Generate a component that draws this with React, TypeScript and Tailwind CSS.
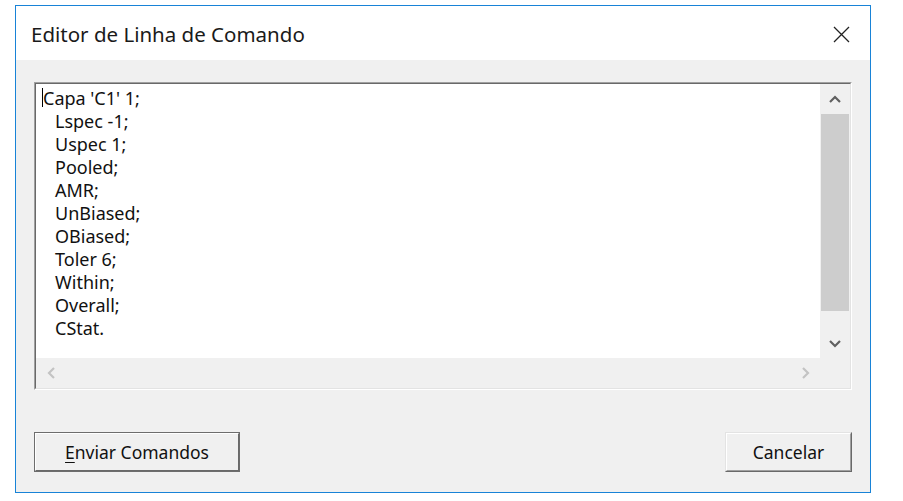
import React from "react";

const lines: [string, boolean][] = [
  ["Capa 'C1' 1;", false],
  ["Lspec -1;", true],
  ["Uspec 1;", true],
  ["Pooled;", true],
  ["AMR;", true],
  ["UnBiased;", true],
  ["OBiased;", true],
  ["Toler 6;", true],
  ["Within;", true],
  ["Overall;", true],
  ["CStat.", true],
];

function Chevron({ dir, color }: { dir: "up" | "down" | "left" | "right"; color: string }) {
  const d =
    dir === "up"
      ? "M1 7 L6 2 L11 7"
      : dir === "down"
      ? "M1 2 L6 7 L11 2"
      : dir === "left"
      ? "M7 1 L2 6 L7 11"
      : "M2 1 L7 6 L2 11";
  const w = dir === "up" || dir === "down" ? 12 : 9;
  const h = dir === "up" || dir === "down" ? 9 : 12;
  return (
    <svg width={w} height={h} viewBox={`0 0 ${w} ${h}`}>
      <path d={d} fill="none" stroke={color} strokeWidth="2.2" />
    </svg>
  );
}

export default function App() {
  return (
    <div
      className="w-[903px] h-[501px] bg-white pt-[5px] pl-[15px]"
      style={{ fontFamily: '"Noto Sans", "Open Sans", sans-serif' }}
    >
      <div className="w-[856px] h-[488px] border border-[#1883d7] flex flex-col">
        {/* Title bar */}
        <div className="h-[54px] bg-white flex items-center justify-between pl-[15px] pr-[20px] pt-[2px] shrink-0">
          <span className="text-[20.5px] text-[#1a1a1a] leading-none">Editor de Linha de Comando</span>
          <svg width="17" height="17" viewBox="0 0 17 17">
            <path d="M1 1 L16 16 M16 1 L1 16" stroke="#222" strokeWidth="1.3" fill="none" />
          </svg>
        </div>
        {/* Body */}
        <div className="flex-1 bg-[#f0f0f0] px-[18px] pt-[22px] pb-[20px] flex flex-col">
          {/* Text area */}
          <div className="h-[308px] border border-t-[#a0a0a0] border-l-[#a0a0a0] border-r-[#ffffff] border-b-[#ffffff]">
            <div className="h-full border border-t-[#696969] border-l-[#696969] border-r-[#e3e3e3] border-b-[#e3e3e3] flex flex-col">
              <div className="flex h-[274px]">
                <div className="flex-1 bg-white pl-[7px] pt-[3px] relative">
                  <div className="absolute left-[6px] top-[4px] w-[1px] h-[19px] bg-black" />
                  {lines.map(([l, indent], i) => (
                    <div
                      key={i}
                      className={`h-[23px] leading-[23px] text-[18px] text-[#111] whitespace-pre ${indent ? "pl-[12px]" : ""}`}
                    >
                      {l}
                    </div>
                  ))}
                </div>
                {/* vertical scrollbar */}
                <div className="w-[30px] bg-[#f0f0f0] flex flex-col">
                  <div className="h-[30px] flex items-center justify-center">
                    <Chevron dir="up" color="#606060" />
                  </div>
                  <div className="h-[197px] mx-[1px] bg-[#cdcdcd]" />
                  <div className="flex-1" />
                  <div className="h-[30px] flex items-center justify-center">
                    <Chevron dir="down" color="#606060" />
                  </div>
                </div>
              </div>
              {/* horizontal scrollbar */}
              <div className="h-[30px] bg-[#f0f0f0] flex">
                <div className="w-[30px] flex items-center justify-center">
                  <Chevron dir="left" color="#c3c3c3" />
                </div>
                <div className="flex-1" />
                <div className="w-[30px] flex items-center justify-center">
                  <Chevron dir="right" color="#c3c3c3" />
                </div>
                <div className="w-[30px]" />
              </div>
            </div>
          </div>
          <div className="flex-1" />
          {/* Buttons */}
          <div className="flex justify-between">
            <div className="w-[206px] h-[40px] border border-[#6d6d6d]">
              <div className="h-full border border-t-[#ffffff] border-l-[#ffffff] border-r-[#696969] border-b-[#696969] bg-[#f0f0f0] flex items-center justify-center text-[17.5px] text-[#111]">
                <span>
                  <span className="underline underline-offset-[3px]">E</span>nviar Comandos
                </span>
              </div>
            </div>
            <div className="w-[127px] h-[40px] border border-t-[#e3e3e3] border-l-[#e3e3e3] border-r-[#696969] border-b-[#696969]">
              <div className="h-full border border-t-[#ffffff] border-l-[#ffffff] border-r-[#a0a0a0] border-b-[#a0a0a0] bg-[#f0f0f0] flex items-center justify-center text-[17.5px] text-[#111]">
                Cancelar
              </div>
            </div>
          </div>
        </div>
      </div>
    </div>
  );
}
